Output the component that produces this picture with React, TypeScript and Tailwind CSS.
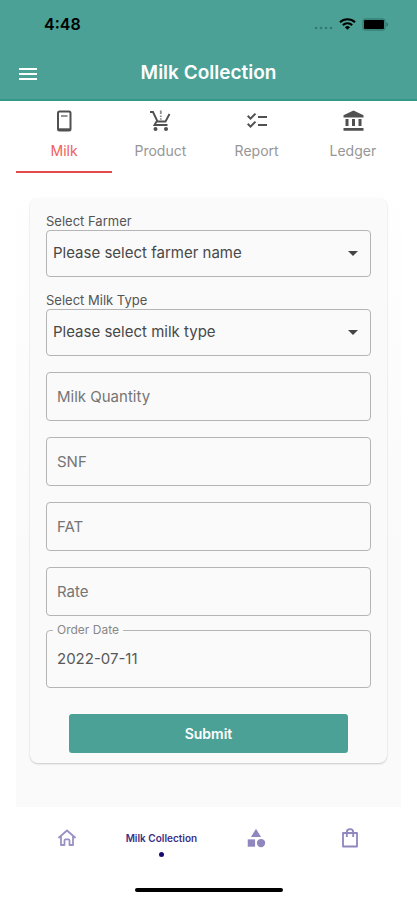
import { useState } from "react";
import type { ReactNode } from "react";
import { MdArrowDropDown, MdCategory, MdChecklist, MdMenu } from "react-icons/md";

function StatusBar() {
  return (
    <div className="flex h-12 items-center justify-between pr-7 pl-11 text-black">
      <span className="text-base font-semibold">4:48</span>
      <div className="flex items-center gap-1.5">
        <svg width="19" height="14" viewBox="0 0 19 14" fill="#347a70" aria-hidden="true">
          <circle cx="2" cy="11" r="1.3" />
          <circle cx="7" cy="11" r="1.3" />
          <circle cx="12" cy="11" r="1.3" />
          <circle cx="17" cy="11" r="1.3" />
        </svg>
        <svg width="17" height="12" viewBox="0 0 17 12" aria-hidden="true">
          <path d="M1 4.2a11 11 0 0 1 15 0M3.8 7.1a7 7 0 0 1 9.4 0" fill="none" stroke="#000" strokeWidth="2.1" />
          <path d="M8.500 11.800 5.900 9.200a3.800 3.800 0 0 1 5.200 0z" />
        </svg>
        <svg width="27" height="13" viewBox="0 0 27 13" aria-hidden="true">
          <rect x="1" y="1" width="22" height="11" rx="2" fill="none" stroke="#2d6f65" />
          <rect x="2" y="2" width="20" height="9" rx="1" />
          <path d="M24.500 4.500v4c1-.4 1.500-1.200 1.500-2s-.5-1.600-1.500-2z" fill="#2d6f65" />
        </svg>
      </div>
    </div>
  );
}

function PhoneIcon() {
  return (
    <svg width="24" height="24" viewBox="0 0 24 24" aria-hidden="true">
      <rect x="6" y="2.500" width="12.500" height="19" rx="1.500" fill="none" stroke="currentColor" strokeWidth="2" />
      <path d="M6 20.300h12.500" stroke="currentColor" strokeWidth="2" />
      <path d="M9 7h6.500" stroke="currentColor" strokeWidth="1.200" />
    </svg>
  );
}

function CartIcon() {
  return (
    <svg width="24" height="24" viewBox="0 0 24 24" fill="none" stroke="currentColor" aria-hidden="true">
      <path d="M2 3h3l4.500 9.500h8L21.500 5M8.500 12.500 6.500 16h13" strokeWidth="1.900" />
      <path d="M12.800 1.500v3.500M12.800 6.500v1.500M12.800 9.200v1.500" strokeWidth="1.800" opacity=".65" />
      <circle cx="7.500" cy="20" r="2" fill="currentColor" stroke="none" />
      <circle cx="18" cy="20" r="2" fill="currentColor" stroke="none" />
    </svg>
  );
}

function BankIcon() {
  return (
    <svg width="24" height="24" viewBox="0 0 24 24" fill="currentColor" aria-hidden="true">
      <path d="M12.500 1.500 22.500 6.200V8.500H2.500V6.200zM4.500 10h3v7h-3zM11 10h3v7h-3zM17.500 10h3v7h-3zM2.500 19h20v2.800h-20z" />
    </svg>
  );
}

const tabs: { name: string; icon: ReactNode }[] = [
  { name: "Milk", icon: <PhoneIcon /> },
  { name: "Product", icon: <CartIcon /> },
  { name: "Report", icon: <MdChecklist size={24} /> },
  { name: "Ledger", icon: <BankIcon /> },
];

function SelectField({ id, label, prompt }: { id: string; label: string; prompt: string }) {
  return (
    <div className="flex flex-col">
      <label htmlFor={id} className="pb-0.5 text-[13px] leading-[14px] text-[#555]">{label}</label>
      <div className="relative">
        <select
          id={id}
          className="block h-[47px] w-full appearance-none rounded-[4px] border border-[#b5b5b5] bg-transparent px-1.5 text-[15px] text-[#484848]"
        >
          <option>{prompt}</option>
        </select>
        <MdArrowDropDown size={24} className="pointer-events-none absolute top-[11px] right-1.5 text-[#444]" />
      </div>
    </div>
  );
}

export default function App() {
  const [active, setActive] = useState("Milk");
  return (
    <div className="flex min-h-screen flex-col bg-white font-['Inter','Liberation_Sans',sans-serif]">
      <header className="border-b-2 border-[#329887] bg-[#4ba196]">
        <StatusBar />
        <div className="grid h-[51px] grid-cols-[40px_1fr_40px] items-center px-2">
          <button type="button" aria-label="Open menu" className="flex justify-center text-white">
            <MdMenu size={24} />
          </button>
          <h1 className="text-center text-[19px] font-semibold text-white">Milk Collection</h1>
        </div>
      </header>

      <div className="flex flex-1 flex-col px-4">
        <div className="grid grid-cols-4" role="tablist">
          {tabs.map((tab) => (
            <button
              key={tab.name}
              type="button"
              role="tab"
              aria-selected={active === tab.name}
              onClick={() => setActive(tab.name)}
              className={
                active === tab.name
                  ? "flex h-[72px] flex-col items-center gap-2 border-b-2 border-[#e04c4c] pt-2 text-[#f0605c]"
                  : "flex h-[72px] flex-col items-center gap-2 border-b-2 border-transparent pt-2 text-[#969696]"
              }
            >
              <span className="text-[#505050]">{tab.icon}</span>
              <span className="text-sm leading-5">{tab.name}</span>
            </button>
          ))}
        </div>

        <main className="flex-1 bg-linear-to-b from-white to-[#fafafa] to-60% px-3.5 pt-[25px] pb-11">
          <form
            className="flex flex-col gap-4 rounded-lg bg-[#fafafa] px-4 pt-4 pb-2.5 shadow-[0_1px_2px_rgba(0,0,0,0.2)]"
            onSubmit={(e) => e.preventDefault()}
          >
            <SelectField id="farmer" label="Select Farmer" prompt="Please select farmer name" />
            <SelectField id="milk-type" label="Select Milk Type" prompt="Please select milk type" />
            {["Milk Quantity", "SNF", "FAT", "Rate"].map((name) => (
              <input
                key={name}
                aria-label={name}
                placeholder={name}
                className="h-[49px] w-full rounded-[4px] border border-[#b5b5b5] bg-transparent px-2.5 text-[15px] text-[#555] placeholder:text-[#757575]"
              />
            ))}
            <fieldset className="-mt-2 h-16 rounded-[4px] border border-[#b5b5b5] px-1.5">
              <legend className="px-1 text-xs leading-3 text-[#888]">
                <label htmlFor="order-date">Order Date</label>
              </legend>
              <input
                id="order-date"
                defaultValue="2022-07-11"
                className="h-11 w-full bg-transparent px-1 text-[15px] text-[#585858]"
              />
            </fieldset>
            <button
              type="submit"
              className="mx-[23px] mt-2.5 h-[39px] rounded-[3px] bg-[#4ba196] text-sm font-semibold text-white"
            >
              Submit
            </button>
          </form>
        </main>
      </div>

      <nav className="grid h-[93px] grid-cols-4 grid-rows-[62px_31px] px-5" aria-label="Main">
        <a href="#home" aria-label="Home" className="flex items-center justify-center text-[#9992c4]">
          <svg width="18" height="18" viewBox="0 0 18 18" fill="none" stroke="currentColor" aria-hidden="true">
            <path d="M1 8.500 9 1.500l8 7M3 7.500V16h3.500v-4.500a1.200 1.200 0 0 1 1.200-1.200h2.600a1.200 1.200 0 0 1 1.200 1.200V16H15V7.500" strokeWidth="1.800" strokeLinejoin="round" strokeLinecap="round" />
          </svg>
        </a>
        <a href="#milk" className="flex flex-col items-center gap-2 pt-[25px] text-[#3b2f85]">
          <span className="text-[10px] leading-3 font-semibold whitespace-nowrap">Milk Collection</span>
          <span className="size-[5px] rounded-full bg-[#160a72]" />
        </a>
        <a href="#products" aria-label="Products" className="flex items-center justify-center text-[#8f87bd]">
          <MdCategory size={22} />
        </a>
        <a href="#orders" aria-label="Orders" className="flex items-center justify-center text-[#8f87bd]">
          <svg width="16" height="20" viewBox="0 0 16 20" fill="none" stroke="currentColor" aria-hidden="true">
            <path d="M1 5h14v13.500H1zM4.800 9V4.400a3.200 3.200 0 0 1 6.400 0V9" strokeWidth="1.800" strokeLinejoin="round" />
          </svg>
        </a>
        <span className="col-span-4 mt-[19px] h-1 w-[148px] justify-self-center rounded-full bg-black" />
      </nav>
    </div>
  );
}
